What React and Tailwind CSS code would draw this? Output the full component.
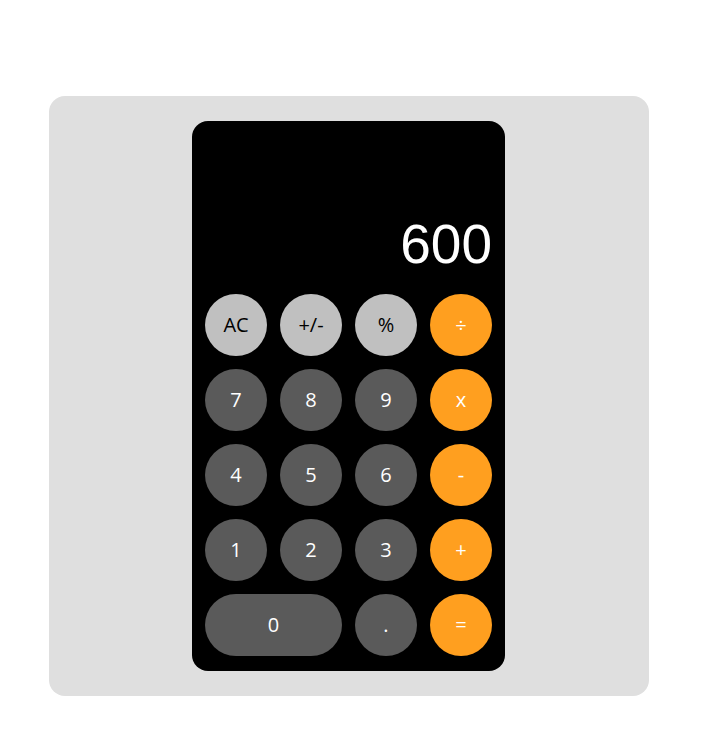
export default function App() {
  const keys = [
    { label: "AC", kind: "light" },
    { label: "+/-", kind: "light" },
    { label: "%", kind: "light" },
    { label: "÷", kind: "op" },
    { label: "7", kind: "num" },
    { label: "8", kind: "num" },
    { label: "9", kind: "num" },
    { label: "x", kind: "op" },
    { label: "4", kind: "num" },
    { label: "5", kind: "num" },
    { label: "6", kind: "num" },
    { label: "-", kind: "op" },
    { label: "1", kind: "num" },
    { label: "2", kind: "num" },
    { label: "3", kind: "num" },
    { label: "+", kind: "op" },
    { label: "0", kind: "num", wide: true },
    { label: ".", kind: "num" },
    { label: "=", kind: "op" },
  ];

  const styles = {
    light: "bg-[#c0c0c0] text-black",
    num: "bg-[#5a5a5a] text-white",
    op: "bg-[#ff9f1f] text-white",
  };

  return (
    <div className="pt-[96px] pl-[49px]">
      <div className="w-[600px] h-[600px] bg-[#dfdfdf] rounded-[16px] flex py-[25px] pl-[143px]">
        <div className="w-[313px] h-[550px] bg-black rounded-[16px] flex flex-col justify-end px-[13px] pb-[15px]">
          <div className="text-white text-right text-[55px] leading-none mb-[22px] font-['Liberation_Sans',Arial,sans-serif]">
            600
          </div>
          <div className="grid grid-cols-4 gap-[13px] font-['Open_Sans','Noto_Sans',sans-serif] text-[20px]">
            {keys.map((k) => (
              <button
                key={k.label}
                className={`${styles[k.kind]} h-[62px] rounded-full flex items-center justify-center ${k.wide ? "col-span-2" : ""}`}
              >
                {k.label}
              </button>
            ))}
          </div>
        </div>
      </div>
    </div>
  );
}
